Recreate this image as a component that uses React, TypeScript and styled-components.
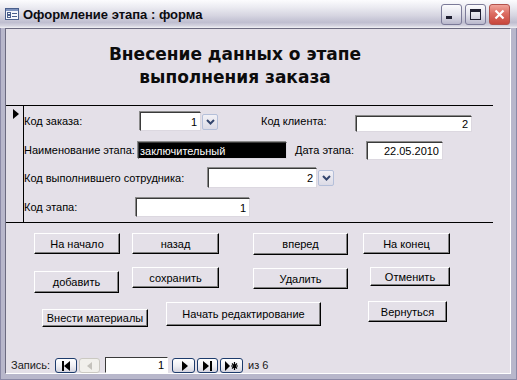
import styled, { createGlobalStyle } from "styled-components";

const FACE = "#e4e0e8";

const GlobalStyle = createGlobalStyle`
  html, body {
    margin: 0;
    padding: 0;
    background: #fff;
  }
  body {
    font-family: "Liberation Sans", Arial, sans-serif;
    font-size: 11px;
  }
`;

function FormIcon() {
  return (
    <svg width="14" height="12" viewBox="0 0 14 12">
      <rect x="0.5" y="0.5" width="13" height="11" fill="#f4f6fb" stroke="#4a5f8c" />
      <rect x="1" y="1" width="12" height="2" fill="#7e93bf" />
      <rect x="2.5" y="4.5" width="3" height="2" fill="none" stroke="#4a5f8c" />
      <rect x="2.5" y="7.5" width="3" height="2" fill="none" stroke="#4a5f8c" />
      <rect x="7" y="5" width="5" height="1" fill="#4a5f8c" />
      <rect x="7" y="8" width="5" height="1" fill="#4a5f8c" />
    </svg>
  );
}

function Chevron() {
  return (
    <svg width="9" height="6" viewBox="0 0 9 6">
      <path d="M1 1 L4.5 4.5 L8 1" fill="none" stroke="#34466e" strokeWidth="2" />
    </svg>
  );
}

type NavKind = "first" | "prev" | "next" | "last" | "new";

function NavGlyph({ kind, color }: { kind: NavKind; color: string }) {
  return (
    <svg width="14" height="10" viewBox="0 0 14 10">
      {kind === "first" && (
        <>
          <rect x="3" y="0" width="2" height="10" fill={color} />
          <path d="M11 0 L5 5 L11 10 Z" fill={color} />
        </>
      )}
      {kind === "prev" && <path d="M9 1 L4 5 L9 9 Z" fill={color} />}
      {kind === "next" && <path d="M5 0 L11 5 L5 10 Z" fill={color} />}
      {kind === "last" && (
        <>
          <path d="M2 0 L8 5 L2 10 Z" fill={color} />
          <rect x="9" y="0" width="2" height="10" fill={color} />
        </>
      )}
      {kind === "new" && (
        <>
          <path d="M0 0 L5 5 L0 10 Z" fill={color} />
          <path
            d="M9.5 1 V9 M6 5 H13 M7 2.5 L12 7.5 M12 2.5 L7 7.5"
            stroke={color}
            strokeWidth="1.2"
          />
        </>
      )}
    </svg>
  );
}

export default function App() {
  return (
    <>
      <GlobalStyle />
      <Window>
        <TitleBar>
          <FormIcon />
          <TitleText>Оформление этапа : форма</TitleText>
          <CaptionButtons>
            <CaptionButton>
              <MinGlyph />
            </CaptionButton>
            <CaptionButton>
              <MaxGlyph />
            </CaptionButton>
            <CaptionButton $close>
              <svg width="11" height="11" viewBox="0 0 11 11">
                <path d="M1.5 1.5 L9.5 9.5 M9.5 1.5 L1.5 9.5" stroke="#fff" strokeWidth="2.2" />
              </svg>
            </CaptionButton>
          </CaptionButtons>
        </TitleBar>

        <Frame>
          <Client>
            <Header>
              <Heading>
                Внесение данных о этапе
                <br />
                выполнения заказа
              </Heading>
            </Header>

            <Detail>
              <RecordSelector>
                <Pointer />
              </RecordSelector>
              <Fields>
                <FieldRow $top={5} $h={21}>
                  <Label $w={116} $dy={4}>Код заказа:</Label>
                  <Combo $dy={1}>
                    <TextBox $w={61} $h={19} $align="right">1</TextBox>
                    <DropButton>
                      <Chevron />
                    </DropButton>
                  </Combo>
                  <Label $w={95} $ml={43} $dy={4}>Код клиента:</Label>
                  <TextBox $w={116} $h={16} $dy={5} $align="right">2</TextBox>
                </FieldRow>

                <FieldRow $top={10} $h={18}>
                  <Label $w={114} $dy={2}>Наименование этапа:</Label>
                  <TextBox $w={149} $h={17} $selected>заключительный</TextBox>
                  <Label $w={72} $ml={8} $dy={2}>Дата этапа:</Label>
                  <TextBox $w={76} $h={18} $align="right">22.05.2010</TextBox>
                </FieldRow>

                <FieldRow $top={8} $h={20}>
                  <Label $w={184} $dy={4}>Код выполнившего сотрудника:</Label>
                  <Combo>
                    <TextBox $w={109} $h={20} $align="right">2</TextBox>
                    <DropButton>
                      <Chevron />
                    </DropButton>
                  </Combo>
                </FieldRow>

                <FieldRow $top={10} $h={19}>
                  <Label $w={112} $dy={3}>Код этапа:</Label>
                  <TextBox $w={114} $h={19} $align="right">1</TextBox>
                </FieldRow>
              </Fields>
            </Detail>

            <Footer>
              <ButtonRow $top={10}>
                <CmdButton $w={86} $h={21} $ml={28}>На начало</CmdButton>
                <CmdButton $w={87} $h={21} $ml={12}>назад</CmdButton>
                <CmdButton $w={95} $h={22} $ml={34}>вперед</CmdButton>
                <CmdButton $w={87} $h={21} $ml={15}>На конец</CmdButton>
              </ButtonRow>
              <ButtonRow $top={12}>
                <CmdButton $w={85} $h={22} $ml={28} $dy={4}>добавить</CmdButton>
                <CmdButton $w={87} $h={21} $ml={13}>сохранить</CmdButton>
                <CmdButton $w={95} $h={21} $ml={34} $dy={1}>Удалить</CmdButton>
                <CmdButton $w={80} $h={19} $ml={22}>Отменить</CmdButton>
              </ButtonRow>
              <ButtonRow $top={8}>
                <CmdButton $w={106} $h={18} $ml={36} $dy={8}>Внести материалы</CmdButton>
                <CmdButton $w={155} $h={24} $ml={18} $dy={1}>Начать редактирование</CmdButton>
                <CmdButton $w={79} $h={21} $ml={47}>Вернуться</CmdButton>
              </ButtonRow>
            </Footer>

            <NavBar>
              <NavLabel>Запись:</NavLabel>
              <NavButton $w={22}>
                <NavGlyph kind="first" color="#000" />
              </NavButton>
              <NavButton $w={21} $disabled>
                <NavGlyph kind="prev" color="#c4c2bc" />
              </NavButton>
              <NavInput>1</NavInput>
              <NavButton $w={23}>
                <NavGlyph kind="next" color="#000" />
              </NavButton>
              <NavButton $w={21}>
                <NavGlyph kind="last" color="#000" />
              </NavButton>
              <NavButton $w={23}>
                <NavGlyph kind="new" color="#000" />
              </NavButton>
              <NavCount>из 6</NavCount>
            </NavBar>
          </Client>
        </Frame>
      </Window>
    </>
  );
}

const Window = styled.div`
  width: 517px;
  height: 380px;
  display: flex;
  flex-direction: column;
  overflow: hidden;
`;

const TitleBar = styled.div`
  height: 28px;
  flex: none;
  display: flex;
  align-items: center;
  padding: 0 7px 0 5px;
  box-sizing: border-box;
  background: linear-gradient(
    180deg,
    #fcfcfe 0%,
    #ececf2 25%,
    #d6d5e1 55%,
    #bfbed0 80%,
    #d4d3df 92%,
    #f2f2f6 100%
  );
`;

const TitleText = styled.span`
  flex: 1;
  margin-left: 4px;
  font: bold 13px "Liberation Sans", Arial, sans-serif;
  color: #0b0b10;
`;

const CaptionButtons = styled.div`
  display: flex;
  gap: 3px;
`;

const CaptionButton = styled.div<{ $close?: boolean }>`
  width: 21px;
  height: 21px;
  box-sizing: border-box;
  border-radius: 3px;
  display: flex;
  align-items: center;
  justify-content: center;
  border: 1px solid ${(p) => (p.$close ? "#b2524c" : "#7b7a98")};
  background: ${(p) =>
    p.$close
      ? "linear-gradient(180deg, #f0a49b 0%, #dc6d62 45%, #c8463c 100%)"
      : "linear-gradient(180deg, #fbfbfd 0%, #e3e3ec 50%, #b9b8cc 100%)"};
`;

const MinGlyph = styled.div`
  width: 6px;
  height: 3px;
  background: #1e1e30;
  margin: 7px 5px 0 0;
`;

const MaxGlyph = styled.div`
  width: 11px;
  height: 11px;
  box-sizing: border-box;
  border: 1px solid #1e1e30;
  border-top-width: 3px;
`;

const Frame = styled.div`
  flex: 1;
  display: flex;
  padding: 0 6px 6px 5px;
  background: #b8b7cb;
  box-shadow: inset 1px 0 0 #8b8aa7, inset -1px 0 0 #8b8aa7, inset 0 -1px 0 #8b8aa7;
`;

const Client = styled.div`
  flex: 1;
  display: flex;
  flex-direction: column;
  background: ${FACE};
  border-style: solid;
  border-width: 1px;
  border-color: #6c6b80 #fff #fff #6c6b80;
`;

const Header = styled.div`
  width: 487px;
  height: 76px;
  flex: none;
`;

const Heading = styled.div`
  width: 280px;
  margin-left: 89px;
  padding-top: 14px;
  text-align: center;
  font: bold 17px/23px "DejaVu Sans", Verdana, sans-serif;
  color: #0c0c0c;
`;

const Detail = styled.div`
  width: 487px;
  height: 118px;
  box-sizing: border-box;
  flex: none;
  display: flex;
  border-top: 1px solid #000;
  border-bottom: 1px solid #000;
`;

const RecordSelector = styled.div`
  width: 17px;
  border-right: 1px solid #000;
  display: flex;
  justify-content: center;
  padding-top: 3px;
`;

const Pointer = styled.div`
  width: 0;
  height: 0;
  margin-left: 2px;
  border-top: 5px solid transparent;
  border-bottom: 5px solid transparent;
  border-left: 6px solid #000;
`;

const Fields = styled.div`
  display: flex;
  flex-direction: column;
`;

const FieldRow = styled.div<{ $top: number; $h: number }>`
  display: flex;
  align-items: flex-start;
  margin-top: ${(p) => p.$top}px;
  height: ${(p) => p.$h}px;
`;

const Label = styled.div<{ $w: number; $ml?: number; $dy?: number }>`
  width: ${(p) => p.$w}px;
  margin-left: ${(p) => p.$ml ?? 0}px;
  margin-top: ${(p) => p.$dy ?? 0}px;
  line-height: 13px;
  color: #000;
  white-space: nowrap;
`;

const Combo = styled.div<{ $dy?: number }>`
  display: flex;
  align-items: center;
  gap: 1px;
  margin-top: ${(p) => p.$dy ?? 0}px;
`;

const TextBox = styled.div<{
  $w: number;
  $h: number;
  $dy?: number;
  $align?: "left" | "right";
  $selected?: boolean;
}>`
  width: ${(p) => p.$w}px;
  height: ${(p) => p.$h}px;
  margin-top: ${(p) => p.$dy ?? 0}px;
  box-sizing: border-box;
  display: flex;
  align-items: center;
  justify-content: ${(p) => (p.$align === "right" ? "flex-end" : "flex-start")};
  padding: ${(p) => (p.$selected ? "0 0 0 1px" : "0 3px")};
  background: ${(p) => (p.$selected ? "#000" : "#fff")};
  color: ${(p) => (p.$selected ? "#fff" : "#000")};
  border: 1px solid;
  border-color: #3a3a3a #dcd8e0 #dcd8e0 #3a3a3a;
  box-shadow: -1px -1px 0 #8a8a8a;
  white-space: nowrap;
`;

const DropButton = styled.div`
  width: 16px;
  height: 16px;
  box-sizing: border-box;
  display: flex;
  align-items: center;
  justify-content: center;
  border: 1px solid #b4bfd9;
  border-radius: 2px;
  background: linear-gradient(180deg, #f2f1f6 0%, #dcdbe6 100%);
`;

const Footer = styled.div`
  width: 487px;
  display: flex;
  flex-direction: column;
`;

const ButtonRow = styled.div<{ $top: number }>`
  display: flex;
  align-items: flex-start;
  margin-top: ${(p) => p.$top}px;
`;

const CmdButton = styled.button<{ $w: number; $h: number; $ml: number; $dy?: number }>`
  width: ${(p) => p.$w}px;
  height: ${(p) => p.$h}px;
  margin: ${(p) => p.$dy ?? 0}px 0 0 ${(p) => p.$ml}px;
  box-sizing: border-box;
  padding: 0;
  display: flex;
  align-items: center;
  justify-content: center;
  background: ${FACE};
  border: 1px solid;
  border-color: #fff #000 #000 #fff;
  box-shadow: inset -1px -1px 0 #808080;
  font: 11px "Liberation Sans", Arial, sans-serif;
  color: #000;
  white-space: nowrap;
`;

const NavBar = styled.div`
  margin-top: auto;
  height: 17px;
  display: flex;
  align-items: flex-end;
  padding-left: 5px;
`;

const NavLabel = styled.span`
  width: 44px;
  line-height: 15px;
  color: #1a1a1a;
`;

const NavButton = styled.div<{ $w: number; $disabled?: boolean }>`
  width: ${(p) => p.$w}px;
  height: 15px;
  box-sizing: border-box;
  margin-right: 2px;
  display: flex;
  align-items: center;
  justify-content: center;
  border-radius: 3px;
  border: 1px solid ${(p) => (p.$disabled ? "#cbc9c2" : "#1d3b6c")};
  background: ${(p) =>
    p.$disabled ? "#f1f0ec" : "linear-gradient(180deg, #ffffff 0%, #eeeef3 55%, #d4d3de 100%)"};
`;

const NavInput = styled.div`
  width: 63px;
  height: 16px;
  box-sizing: border-box;
  margin: 0 4px 0 3px;
  display: flex;
  align-items: center;
  justify-content: flex-end;
  padding-right: 3px;
  background: #fff;
  border: 1px solid;
  border-color: #3a3a3a #fff #fff #3a3a3a;
`;

const NavCount = styled.span`
  margin-left: 3px;
  line-height: 15px;
  color: #1a1a1a;
`;
